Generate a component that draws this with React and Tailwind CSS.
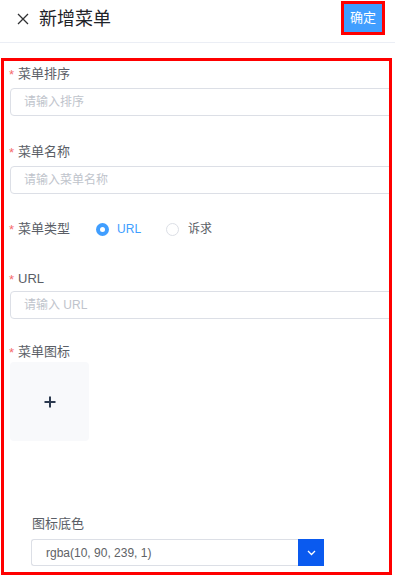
import React from "react";

const FONT = { fontFamily: '"Liberation Sans", "Noto Sans CJK SC", sans-serif' };

function Label({ children, className = "" }) {
  return (
    <div className={`flex items-center h-5 pl-[5px] text-[13px] text-[#5a5e66] ${className}`}>
      <span className="text-[#f56c6c] mr-[4px] text-[13px] leading-none">*</span>
      <span>{children}</span>
    </div>
  );
}

function Input({ placeholder, className = "" }) {
  return (
    <div className={`ml-[6px] h-[28px] w-[400px] rounded-[4px] border border-[#dcdfe6] bg-white flex items-center pl-[13px] text-[12px] text-[#c0c4cc] ${className}`}>
      {placeholder}
    </div>
  );
}

export default function App() {
  return (
    <div className="w-[395px] h-[578px] bg-white overflow-hidden" style={FONT}>
      <div className="h-[43px] border-b border-[#ebeef5] flex justify-between pl-[17px] pr-[10px]">
        <div className="flex items-center h-[37px]">
          <svg width="12" height="12" viewBox="0 0 12 12" className="mr-[10px]">
            <path d="M1 1 L11 11 M11 1 L1 11" stroke="#303133" strokeWidth="1.3" fill="none" />
          </svg>
          <span className="text-[18px] text-[#1f2329] leading-none">新增菜单</span>
        </div>
        <div className="mt-[1px] h-[34px] w-[44px] border-[3px] border-[#ff0000] bg-[#409eff] flex items-center justify-center text-white text-[13px]">
          确定
        </div>
      </div>

      <div className="mt-[15px] ml-[1px] w-[391px] h-[517px] border-[3px] border-[#ff0000] overflow-hidden pt-[3px]">
        <Label>菜单排序</Label>
        <Input placeholder="请输入排序" className="mt-[4px]" />

        <Label className="mt-[26px]">菜单名称</Label>
        <Input placeholder="请输入菜单名称" className="mt-[4px]" />

        <div className="mt-[25px] flex items-center h-5">
          <Label>菜单类型</Label>
          <div className="ml-[26px] flex items-center">
            <span className="w-[13px] h-[13px] rounded-full bg-[#409eff] flex items-center justify-center">
              <span className="w-[5px] h-[5px] rounded-full bg-white" />
            </span>
            <span className="ml-[8px] text-[12px] text-[#409eff]">URL</span>
          </div>
          <div className="ml-[25px] flex items-center">
            <span className="w-[13px] h-[13px] rounded-full border border-[#dcdfe6] bg-white" />
            <span className="ml-[9px] text-[12px] text-[#5a5e66]">诉求</span>
          </div>
        </div>

        <Label className="mt-[30px]">URL</Label>
        <Input placeholder="请输入 URL" className="mt-[2px]" />

        <Label className="mt-[23px]">菜单图标</Label>
        <div className="ml-[6px] w-[79px] h-[79px] rounded-[4px] bg-[#f8f9fb] flex items-center justify-center">
          <svg width="12" height="12" viewBox="0 0 12 12">
            <path d="M6 0.5 V11.5 M0.5 6 H11.5" stroke="#2c3a4f" strokeWidth="2" fill="none" />
          </svg>
        </div>

        <div className="mt-[73px] ml-[28px] h-5 flex items-center text-[13px] text-[#5a5e66]">图标底色</div>
        <div className="mt-[5px] ml-[27px] flex h-[27px]">
          <div className="w-[267px] h-full border border-[#dcdfe6] border-r-0 rounded-l-[3px] flex items-center pl-[14px] text-[12px] text-[#606266]">
            rgba(10, 90, 239, 1)
          </div>
          <div className="w-[26px] h-full bg-[#0a5aef] flex items-center justify-center">
            <svg width="9" height="6" viewBox="0 0 9 6">
              <path d="M1 1 L4.5 4.5 L8 1" stroke="#ffffff" strokeWidth="1.3" fill="none" />
            </svg>
          </div>
        </div>
      </div>
    </div>
  );
}
